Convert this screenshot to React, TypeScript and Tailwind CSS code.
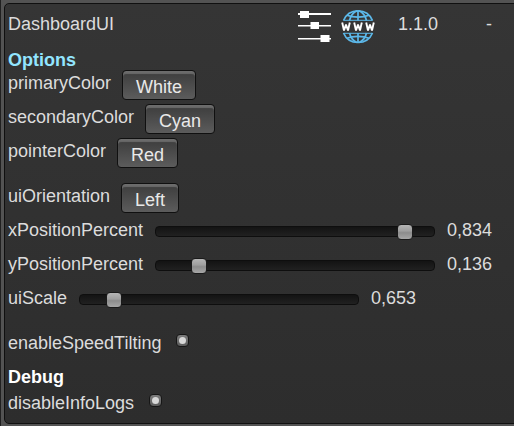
import React from "react";

function Choice({ label, name, className, width }: { label: string; name: string; className: string; width: string }) {
  return (
    <div className={`flex items-start ${className}`}>
      <span className="mt-[3px]">{name}</span>
      <button
        className={`h-[30px] ${width} shrink-0 rounded-[4px] border border-[#101010] bg-linear-to-b from-[#3c3c3c] to-[#5c5c5c] pt-[3px] text-[#e9e9e9] shadow-[inset_0_1px_0_#6c6c6c,inset_0_3px_1px_#6a6a6a]`}
      >
        <span className="block h-[25px] leading-[27px]">{label}</span>
      </button>
    </div>
  );
}

function SliderRow({ name, value, gap, thumb }: { name: string; value: string; gap: string; thumb: string }) {
  return (
    <div className="flex h-[34px] items-start">
      <span>{name}</span>
      <div className={`mt-[6px] h-[11px] w-[280px] shrink-0 rounded-[4px] border border-[#0e0e0e] bg-linear-to-b from-[#131313] to-[#212121] ${gap}`}>
        <div
          className={`-mt-[3px] h-4 w-4 rounded-[4px] border border-[#1a1a1a] bg-[linear-gradient(#b5b5b5,#9f9f9f_42%,#8c8c8c_55%,#a6a6a6)] ${thumb}`}
        />
      </div>
      <span className="ml-3">{value}</span>
    </div>
  );
}

function Toggle({ className }: { className: string }) {
  return (
    <span
      className={`flex h-[13px] w-[13px] items-center justify-center rounded-[4px] border border-[#161616] bg-linear-to-b from-[#7c7c7c] to-[#5c5c5c] ${className}`}
    >
      <span className="h-[7px] w-[7px] rounded-full bg-[#d8d8d8]" />
    </span>
  );
}

function SlidersIcon() {
  return (
    <svg width="34" height="36" viewBox="0 0 34 36" fill="#fff">
      <path d="M0 5h33v2H0zM0 17h33v1.500H0zM0 30h33v1.500H0z" />
      <path d="M2 3h9v7H2zM12.500 14h8.500v7h-8.500zM22.500 27h9v7h-9z" />
    </svg>
  );
}

function GlobeIcon() {
  return (
    <svg width="34" height="36" viewBox="0 0 34 36" fill="none">
      <g stroke="#5cb8e9" strokeWidth="1.7">
        <path d="M2.500 12.500C5 6.500 10 2.800 17 2.800s12 3.700 14.500 9.700M2.500 25C5 31 10 34.500 17 34.500s12-3.500 14.500-9.500" />
        <path d="M17 2.800v9.700M17 25v9.500M8.500 12.500c1-4 3.500-8 7.500-9.700M25.500 12.500c-1-4-3.500-8-7.500-9.700M8.500 25c1 4 3.500 8 7.500 9.500M25.500 25c-1 4-3.500 8-7.500 9.500" />
        <path d="M6 7.300c6 2.400 16 2.400 22 0M6 30.200c6-2.400 16-2.400 22 0" />
        <path d="M2.500 12.300h29M2.500 25.300h29" strokeWidth="1" />
      </g>
      <g stroke="#fff" strokeWidth="1.900" strokeLinejoin="bevel">
        <path d="M1.200 14.500l1.800 8 2-6 2 6 1.800-8M13.200 14.500l1.800 8 2-6 2 6 1.800-8M25.200 14.500l1.800 8 2-6 2 6 1.800-8" />
      </g>
    </svg>
  );
}

export default function App() {
  return (
    <div className="h-[426px] w-[514px] overflow-hidden border-l border-[#202020] bg-[#535353] pt-[3px] pl-[3px] font-['Liberation_Sans',Arial,sans-serif] text-[18px] leading-[20px] text-[#dcdcdc]">
      <main className="h-[421px] w-[520px] rounded-[5px] border border-[#101010] bg-linear-to-b from-[#353535] to-[#2d2d2d] pl-[3px]">
        <header className="flex h-[46px] items-start pt-[10px]">
          <span className="w-[290px]">DashboardUI</span>
          <div className="-mt-[6px] flex w-[100px] gap-[9px]">
            <SlidersIcon />
            <GlobeIcon />
          </div>
          <span className="w-[88px]">1.1.0</span>
          <span>-</span>
        </header>
        <h2 className="h-5 font-bold text-[#92e5ff]">Options</h2>
        <Choice name="primaryColor" label="White" width="w-[74px] ml-[11px]" className="h-[34px]" />
        <Choice name="secondaryColor" label="Cyan" width="w-[70px] ml-[11px]" className="h-[34px]" />
        <Choice name="pointerColor" label="Red" width="w-[61px] ml-[11px]" className="h-[45px]" />
        <Choice name="uiOrientation" label="Left" width="w-[58px] ml-[11px]" className="h-[37px]" />
        <SliderRow name="xPositionPercent" value="0,834" gap="ml-[12px]" thumb="ml-[241px]" />
        <SliderRow name="yPositionPercent" value="0,136" gap="ml-[12px]" thumb="ml-[35px]" />
        <SliderRow name="uiScale" value="0,653" gap="ml-[12px]" thumb="ml-[26px]" />
        <div className="mt-[11px] flex h-[34px] items-start">
          <span>enableSpeedTilting</span>
          <Toggle className="mt-[1px] ml-[15px]" />
        </div>
        <h2 className="h-[26px] font-bold text-white">Debug</h2>
        <div className="flex items-start">
          <span>disableInfoLogs</span>
          <Toggle className="mt-[1px] ml-[15px]" />
        </div>
      </main>
    </div>
  );
}
